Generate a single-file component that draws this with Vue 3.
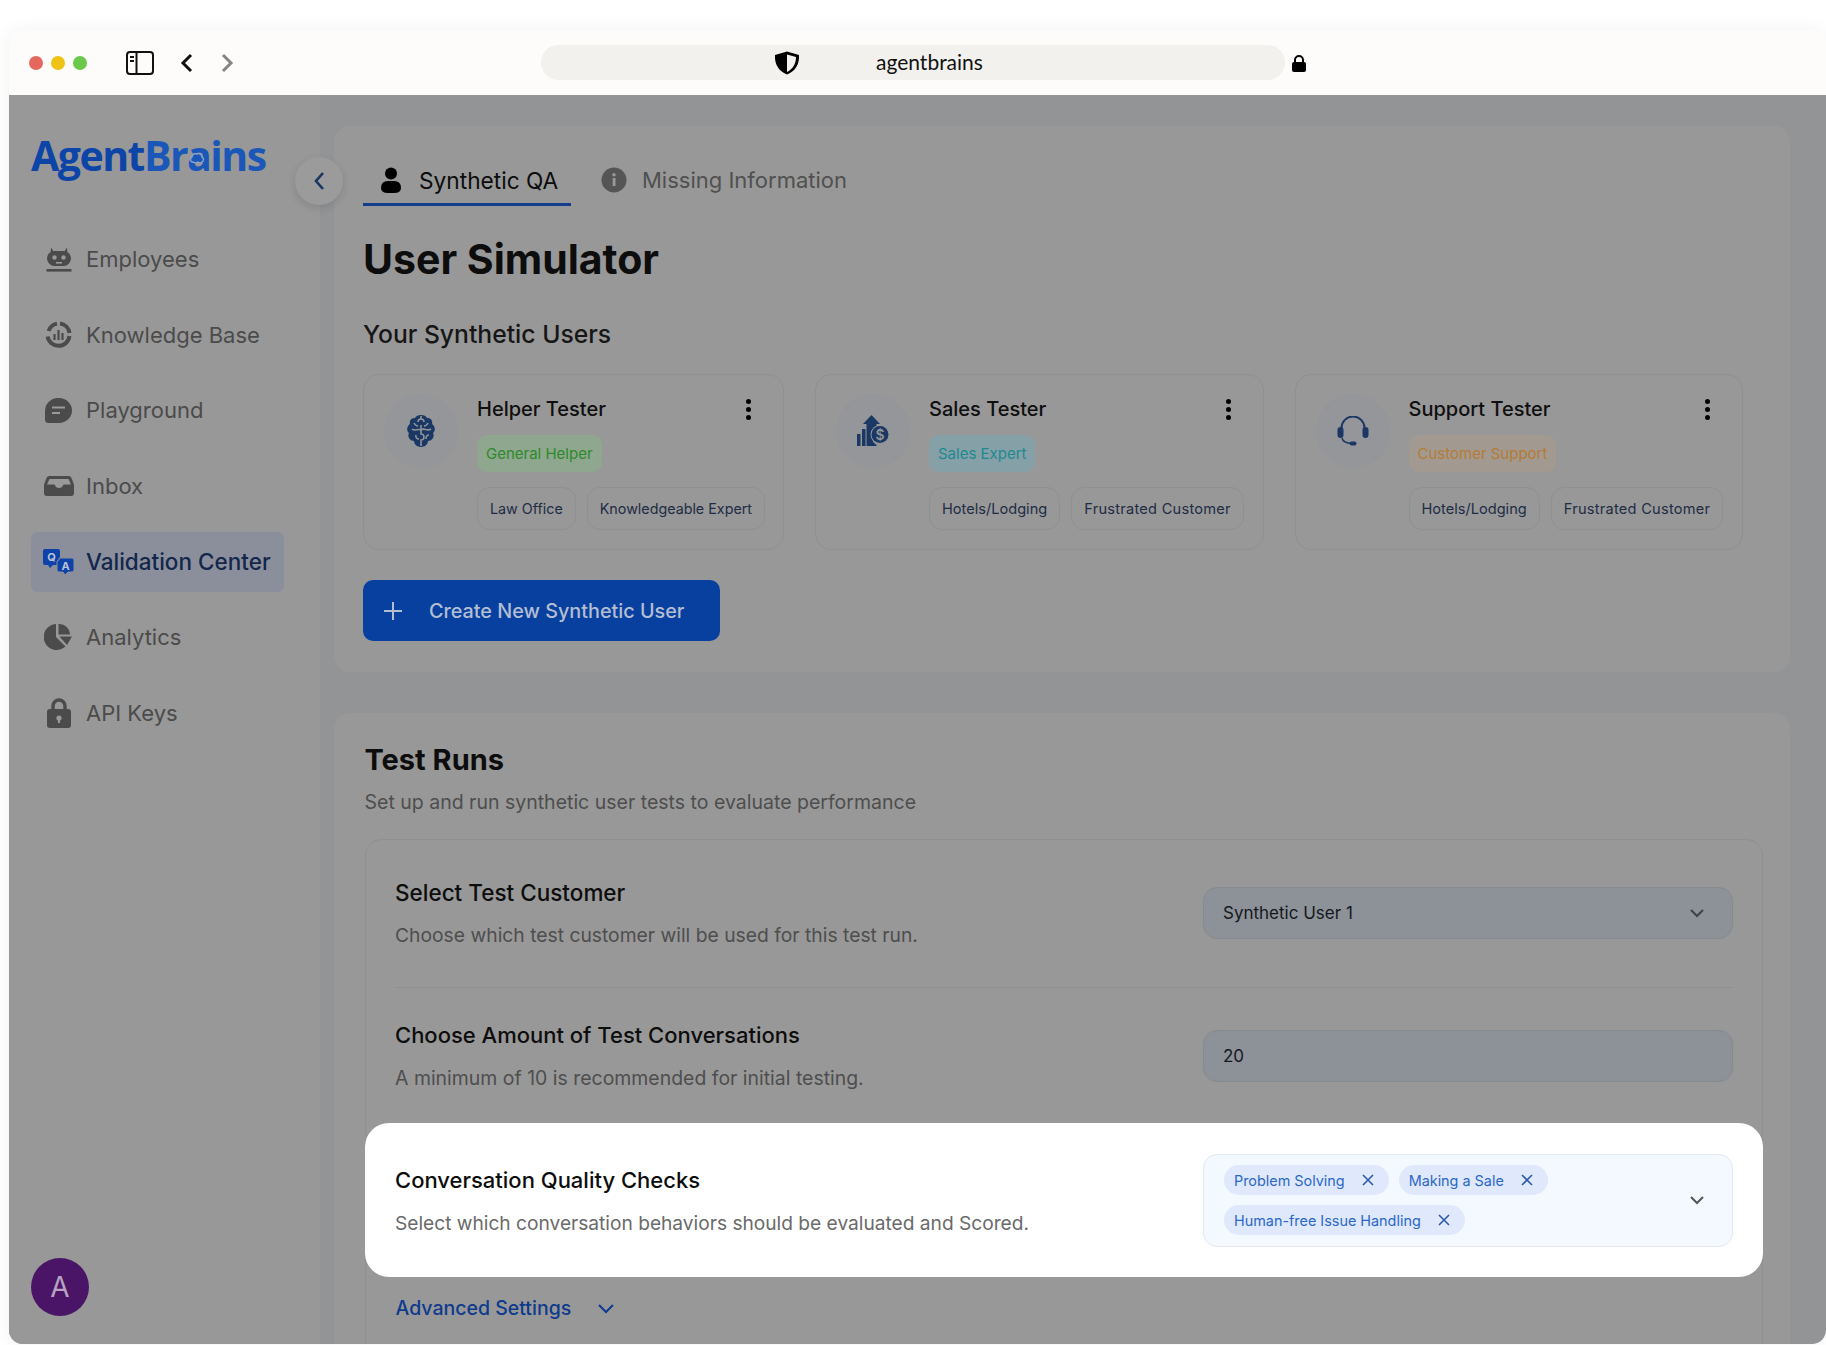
<template>
  <div class="page">
    <div class="window">
      <header class="toolbar">
        <div class="lights">
          <span class="light light-red"></span>
          <span class="light light-yellow"></span>
          <span class="light light-green"></span>
        </div>
        <svg class="panel-icon" width="28" height="24" viewBox="0 0 28 24" fill="none">
          <rect x="1" y="1" width="26" height="22" rx="3" stroke="#111" stroke-width="2" />
          <path d="M10.5 1v22" stroke="#111" stroke-width="2" />
          <path d="M4 6h4M4 10h4" stroke="#111" stroke-width="2" />
        </svg>
        <svg class="back" width="13" height="20" viewBox="0 0 13 20" fill="none">
          <path d="M11 2 3 10l8 8" stroke="#111" stroke-width="3" />
        </svg>
        <svg class="forward" width="13" height="20" viewBox="0 0 13 20" fill="none">
          <path d="m2 2 8 8-8 8" stroke="#858585" stroke-width="3" />
        </svg>
        <div class="address">
          <svg width="28" height="24" viewBox="0 0 28 24">
            <path d="M14 0.5 26 4c.6 9-3.4 16-12 19.5C5.400 20 1.400 13 2 4z" fill="#000" />
            <path d="M14 3.500 23 6c0 6.500-3 12-9 15z" fill="#f2f1ee" />
          </svg>
          <span class="address-text">agentbrains</span>
        </div>
        <svg class="lock" width="16" height="17" viewBox="0 0 16 17">
          <path d="M4 8V5a4 4 0 0 1 8 0v3" fill="none" stroke="#000" stroke-width="2" />
          <rect x="1" y="7" width="14" height="10" rx="2" fill="#000" />
        </svg>
      </header>

      <div class="app">
        <aside class="sidebar">
          <div class="logo">
            <span class="logo-a">Agent</span><span class="logo-b">Br<span class="logo-brain">a<svg width="16" height="14" viewBox="0 0 16 14" fill="none">
              <path d="M3 11C1 10 1 7 3 6c0-3 3-4 5-3 2-1 5 0 5 3 2 1 2 4 0 5-1 1-3 1-4 0-1 1-4 1-5 0z" fill="#1a57b8" stroke="#8fa3c4" stroke-width="1.400" />
            </svg></span>ins</span>
          </div>
          <nav class="nav">
            <a v-for="item in navItems" :key="item.label" class="nav-item" :class="{ active: item.active }">
              <span class="nav-icon">
                <svg v-if="item.icon === 'robot'" width="26" height="25" viewBox="0 0 26 25">
                  <path d="M5 0.500 8 5h10l3-4.500.500 6.500H4.500z" fill="#4b4b4b" />
                  <rect x="1" y="4" width="24" height="15" rx="7.500" fill="#4b4b4b" />
                  <circle cx="8.500" cy="10.500" r="2.200" fill="#999" />
                  <circle cx="17.500" cy="10.500" r="2.200" fill="#999" />
                  <rect x="10" y="15" width="6" height="1.600" fill="#999" />
                  <rect x="0.500" y="22" width="25" height="2.600" fill="#4b4b4b" />
                </svg>
                <svg v-else-if="item.icon === 'knowledge'" width="27" height="27" viewBox="0 0 27 27" fill="none">
                  <path d="M12 2.600A11 11 0 0 0 3.600 10M15 2.600A11 11 0 0 1 24.500 12M24.400 15A11 11 0 0 1 2.600 15.500" stroke="#4b4b4b" stroke-width="4" />
                  <path d="M9.500 13v6M13.500 9v10M17.500 12v7" stroke="#4b4b4b" stroke-width="2.200" />
                </svg>
                <svg v-else-if="item.icon === 'chat'" width="27" height="25" viewBox="0 0 27 25">
                  <path d="M14 0a13 12.500 0 1 1 0 25H3.500Q0 25 0 21.500V13A13 13 0 0 1 14 0z" fill="#4b4b4b" />
                  <path d="M7 9.500h13M7 15h8" stroke="#999" stroke-width="2.200" />
                </svg>
                <svg v-else-if="item.icon === 'inbox'" width="30" height="20" viewBox="0 0 30 20">
                  <path d="M5 0h20q2 0 3 3l2 6v8q0 3-3 3H3q-3 0-3-3V9l2-6q1-3 3-3z" fill="#4b4b4b" />
                  <path d="M3 8.500 5.500 3h19L27 8.500h-7.500Q18 12 15 12t-4.500-3.500z" fill="#999" />
                </svg>
                <svg v-else-if="item.icon === 'qa'" width="31" height="26" viewBox="0 0 31 26">
                  <path d="M2 0h13q2 0 2 2v12q0 2-2 2H10l-3 3-2-3H2q-2 0-2-2V2q0-2 2-2z" fill="#0d43a8" />
                  <path d="M16 9h13q2 0 2 2v10q0 2-2 2h-4l-3 3-2-3h-4q-2 0-2-2v-8q0-2 2-2z" fill="#0d43a8" stroke="#8a8f9b" stroke-width="1" />
                  <text x="8.500" y="12" text-anchor="middle" class="qa-letter">Q</text>
                  <text x="22.500" y="20.500" text-anchor="middle" class="qa-letter">A</text>
                </svg>
                <svg v-else-if="item.icon === 'pie'" width="29" height="26" viewBox="0 0 29 26">
                  <path d="M12 0v13l9.500 9.500A13 13 0 1 1 12 0z" fill="#4b4b4b" />
                  <path d="M14.500 0A11 11 0 0 1 26 10.500H14.500z" fill="#4b4b4b" />
                  <path d="M15.500 12.500H28L23 21z" fill="#4b4b4b" />
                </svg>
                <svg v-else width="26" height="30" viewBox="0 0 26 30">
                  <path d="M7 13V8a6 6 0 0 1 12 0v5" fill="none" stroke="#4b4b4b" stroke-width="3.400" />
                  <rect x="1" y="11" width="24" height="19" rx="3" fill="#4b4b4b" />
                  <circle cx="13" cy="20" r="2.600" fill="#999" />
                  <rect x="12" y="20" width="2" height="5" fill="#999" />
                </svg>
              </span>
              <span>{{ item.label }}</span>
            </a>
          </nav>
          <div class="avatar">A</div>
        </aside>

        <button class="collapse" type="button">
          <svg width="12" height="20" viewBox="0 0 12 20" fill="none">
            <path d="M10 2 3 10l7 8" stroke="#1a3563" stroke-width="2.600" />
          </svg>
        </button>

        <main class="main">
          <section class="card card-top">
            <div class="tabs">
              <div class="tab tab-on">
                <svg width="22" height="26" viewBox="0 0 22 26">
                  <circle cx="11" cy="6.500" r="6" fill="#000" />
                  <path d="M1 21q0-7 7-7h6q7 0 7 7 0 5-7 5H8q-7 0-7-5z" fill="#000" />
                </svg>
                <span>Synthetic QA</span>
              </div>
              <div class="tab tab-off">
                <svg width="26" height="26" viewBox="0 0 26 26">
                  <circle cx="13" cy="13" r="12.500" fill="#555" />
                  <rect x="11.700" y="11" width="2.800" height="8" fill="#999" />
                  <circle cx="13" cy="7.700" r="1.700" fill="#999" />
                </svg>
                <span>Missing Information</span>
              </div>
            </div>

            <h1 class="title">User Simulator</h1>
            <h2 class="subtitle">Your Synthetic Users</h2>

            <div class="users">
              <article v-for="user in users" :key="user.name" class="user" :class="user.size">
                <div class="user-avatar">
                  <svg v-if="user.icon === 'brain'" width="28" height="32" viewBox="0 0 28 32">
                    <path d="M14 0c3 0 5 1 6 3 4 0 6 3 5 6 3 2 4 7 1 9 2 4-1 8-5 8 0 3-3 6-7 6s-7-3-7-6c-4 0-7-4-5-8-3-2-2-7 1-9-1-3 1-6 5-6 1-2 3-3 6-3z" fill="#1b3763" />
                    <path d="M14 1v4m-3 2a3 3 0 0 1 6 0M14 10v5c-3-2-6 2-9-1M14 15c3-3 6 2 10-1M14 15v4a3 3 0 0 1 0 6v6M9 20a3 3 0 0 0 3 4M7 8c1 2 2 3 4 3M21 8c-1 2-2 3-4 3M22 20c-2 0-3 1-3 4" fill="none" stroke="#8f9398" stroke-width="1.600" />
                  </svg>
                  <svg v-else-if="user.icon === 'sales'" width="32" height="32" viewBox="0 0 32 32">
                    <path d="M14.500 0 23 9h-3.500v5.300a9 9 0 0 0 0 15.600V31h-10V9H6z" fill="#1b3763" />
                    <rect x="0" y="19" width="3.500" height="12" fill="#1b3763" />
                    <rect x="5" y="14" width="3.500" height="17" fill="#1b3763" />
                    <circle cx="23" cy="19.500" r="9.500" fill="#949699" />
                    <circle cx="23" cy="19.500" r="8.500" fill="#1b3763" />
                    <text x="23" y="24.500" text-anchor="middle" class="dollar">$</text>
                  </svg>
                  <svg v-else width="32" height="30" viewBox="0 0 32 30" fill="none">
                    <path d="M4.500 14V12a11.500 11.500 0 0 1 23 0v2" stroke="#1b3763" stroke-width="2" />
                    <rect x="0.500" y="11" width="6" height="11" rx="3" fill="#1b3763" />
                    <rect x="25.500" y="11" width="6" height="11" rx="3" fill="#1b3763" />
                    <path d="M5 22q1 5 10 5.500" stroke="#1b3763" stroke-width="1.500" />
                    <rect x="12.500" y="25.500" width="7" height="4" rx="2" fill="#1b3763" />
                  </svg>
                </div>
                <div class="user-body">
                  <div class="user-head">
                    <span class="user-name">{{ user.name }}</span>
                    <span class="kebab"><i></i><i></i><i></i></span>
                  </div>
                  <span class="badge" :class="user.tone">{{ user.badge }}</span>
                  <div class="tags">
                    <span v-for="tag in user.tags" :key="tag" class="tag">{{ tag }}</span>
                  </div>
                </div>
              </article>
            </div>

            <button class="create" type="button">
              <svg width="18" height="18" viewBox="0 0 18 18" fill="none">
                <path d="M9 0v18M0 9h18" stroke="#b3bed2" stroke-width="2" />
              </svg>
              <span>Create New Synthetic User</span>
            </button>
          </section>

          <section class="card card-runs">
            <h2 class="runs-title">Test Runs</h2>
            <p class="runs-sub">Set up and run synthetic user tests to evaluate performance</p>

            <div class="panel">
              <div class="row row-first">
                <div class="row-text">
                  <h3>Select Test Customer</h3>
                  <p>Choose which test customer will be used for this test run.</p>
                </div>
                <div class="field">
                  <span>Synthetic User 1</span>
                  <svg width="16" height="10" viewBox="0 0 16 10" fill="none">
                    <path d="m2 2 6 6 6-6" stroke="#3f4247" stroke-width="2" />
                  </svg>
                </div>
              </div>
              <div class="row row-second">
                <div class="row-text">
                  <h3>Choose Amount of Test Conversations</h3>
                  <p>A minimum of 10 is recommended for initial testing.</p>
                </div>
                <div class="field">
                  <span>20</span>
                </div>
              </div>
              <div class="row-hl">
                <div class="row-text">
                  <h3>Conversation Quality Checks</h3>
                  <p>Select which conversation behaviors should be evaluated and Scored.</p>
                </div>
                <div class="multi">
                  <div class="chips">
                    <span v-for="chip in chips" :key="chip" class="chip">
                      {{ chip }}
                      <svg width="12" height="12" viewBox="0 0 12 12" fill="none">
                        <path d="m1 1 10 10M11 1 1 11" stroke="#2f5ba6" stroke-width="1.600" />
                      </svg>
                    </span>
                  </div>
                  <svg width="16" height="10" viewBox="0 0 16 10" fill="none">
                    <path d="m2 2 6 6 6-6" stroke="#555" stroke-width="2" />
                  </svg>
                </div>
              </div>
              <div class="advanced">
                <span>Advanced Settings</span>
                <svg width="18" height="11" viewBox="0 0 18 11" fill="none">
                  <path d="m2 2 7 7 7-7" stroke="#0e3b8d" stroke-width="2" />
                </svg>
              </div>
            </div>
          </section>
        </main>
      </div>
    </div>
  </div>
</template>

<script setup>
const navItems = [
  { label: 'Employees', icon: 'robot' },
  { label: 'Knowledge Base', icon: 'knowledge' },
  { label: 'Playground', icon: 'chat' },
  { label: 'Inbox', icon: 'inbox' },
  { label: 'Validation Center', icon: 'qa', active: true },
  { label: 'Analytics', icon: 'pie' },
  { label: 'API Keys', icon: 'lock' }
];

const users = [
  { name: 'Helper Tester', badge: 'General Helper', tone: 'tone-green', icon: 'brain', size: 'narrow', tags: ['Law Office', 'Knowledgeable Expert'] },
  { name: 'Sales Tester', badge: 'Sales Expert', tone: 'tone-teal', icon: 'sales', size: 'wide', tags: ['Hotels/Lodging', 'Frustrated Customer'] },
  { name: 'Support Tester', badge: 'Customer Support', tone: 'tone-orange', icon: 'headset', size: 'wide', tags: ['Hotels/Lodging', 'Frustrated Customer'] }
];

const chips = ['Problem Solving', 'Making a Sale', 'Human-free Issue Handling'];
</script>

<style>
html,
body {
  margin: 0;
  background: #fff;
}
</style>

<style scoped>
.page {
  width: 1826px;
  height: 1345px;
  box-sizing: border-box;
  padding: 30px 0 1px 9px;
  overflow: hidden;
  font-family: Inter, "Liberation Sans", sans-serif;
}

.window {
  position: relative;
  display: flex;
  flex-direction: column;
  height: 100%;
  border-radius: 14px;
  overflow: hidden;
  box-shadow: 0 0 18px rgba(0, 0, 0, 0.06);
}

.toolbar {
  display: flex;
  align-items: center;
  flex: none;
  height: 65px;
  background: #fdfcfa;
}

.lights {
  display: flex;
  gap: 8px;
  margin-left: 20px;
}

.light {
  width: 14px;
  height: 14px;
  border-radius: 50%;
}

.light-red { background: #e5685f; }
.light-yellow { background: #efc316; }
.light-green { background: #6bc84a; }

.panel-icon {
  margin-left: 39px;
}

.back {
  margin-left: 26px;
}

.forward {
  margin-left: 28px;
}

.address {
  display: flex;
  align-items: center;
  width: 744px;
  height: 35px;
  margin-left: 307px;
  padding-left: 232px;
  box-sizing: border-box;
  border-radius: 18px;
  background: #f2f1ee;
}

.address-text {
  margin: -2px 0 0 75px;
  font-family: Lato, sans-serif;
  font-size: 21px;
  color: #111;
}

.lock {
  margin-left: 6px;
  margin-top: 2px;
}

.app {
  position: relative;
  display: flex;
  flex: 1;
  min-height: 0;
  background: #929496;
}

.sidebar {
  display: flex;
  flex-direction: column;
  flex: none;
  width: 311px;
  height: 100%;
  box-sizing: border-box;
  padding: 32px 0 28px 22px;
  background: #989898;
}

.logo {
  height: 56px;
  line-height: 56px;
  font-family: "Open Sans", sans-serif;
  font-size: 41px;
  font-weight: 700;
  letter-spacing: -1.500px;
}

.logo-a { color: #0d44a8; }
.logo-b { color: #1a57b8; }

.logo-brain {
  position: relative;
}

.logo-brain svg {
  position: absolute;
  left: 2px;
  top: 24px;
}

.nav {
  display: flex;
  flex-direction: column;
  gap: 15.700px;
  width: 253px;
  margin-top: 46px;
}

.nav-item {
  display: flex;
  align-items: center;
  gap: 12px;
  height: 60px;
  padding-left: 12px;
  border-radius: 6px;
  font-size: 22px;
  color: #4b4b4b;
}

.nav-item.active {
  background: #8a8f9b;
  color: #13264c;
  font-size: 22.500px;
  font-weight: 500;
}

.nav-icon {
  display: flex;
  align-items: center;
  justify-content: center;
  width: 31px;
}

.qa-letter {
  font-family: Inter, sans-serif;
  font-size: 11px;
  font-weight: 700;
  fill: #b8c2d6;
}

.dollar {
  font-family: Inter, sans-serif;
  font-size: 14px;
  font-weight: 600;
  fill: #8f9398;
}

.avatar {
  display: flex;
  align-items: center;
  justify-content: center;
  width: 58px;
  height: 58px;
  margin-top: auto;
  border-radius: 50%;
  background: #4a1566;
  color: #b7a3c2;
  font-size: 28px;
}

.collapse {
  position: absolute;
  top: 62px;
  left: 286px;
  display: flex;
  align-items: center;
  justify-content: center;
  width: 48px;
  height: 48px;
  padding: 0;
  border: 0;
  border-radius: 50%;
  background: #9b9b9b;
  box-shadow: 0 3px 8px rgba(0, 0, 0, 0.12);
}

.main {
  flex: 1;
  min-width: 0;
  padding: 31px 36px 0 14px;
}

.card {
  border-radius: 16px;
  background: #989898;
}

.card-top {
  height: 546px;
  box-sizing: border-box;
  padding: 31px 29px;
}

.tabs {
  display: flex;
  gap: 30px;
}

.tab {
  display: flex;
  align-items: center;
  height: 49px;
  box-sizing: border-box;
  border-bottom: 3px solid transparent;
  font-size: 22px;
}

.tab-on {
  gap: 17px;
  width: 208px;
  padding-left: 17px;
  border-bottom-color: #153d8e;
  font-size: 22.700px;
  color: #0c0c0c;
}

.tab-off {
  gap: 15px;
  color: #505050;
}

.title {
  margin: 30px 0 0;
  font-size: 41px;
  line-height: 46px;
  font-weight: 700;
  color: #0d0d0d;
}

.subtitle {
  margin: 37px 0 0;
  font-size: 24.700px;
  line-height: 30px;
  font-weight: 500;
  color: #161616;
}

.users {
  display: flex;
  gap: 31px;
  margin-top: 25px;
}

.user {
  display: flex;
  gap: 19px;
  height: 176px;
  box-sizing: border-box;
  padding: 19px 20px 0;
  border: 1px solid #8f9092;
  border-radius: 16px;
}

.narrow { width: 421px; }
.wide { width: 448.500px; }

.user-avatar {
  display: flex;
  align-items: center;
  justify-content: center;
  flex: none;
  width: 74px;
  height: 74px;
  border-radius: 50%;
  background: #949699;
}

.user-body {
  flex: 1;
  min-width: 0;
}

.user-head {
  display: flex;
  align-items: center;
  justify-content: space-between;
  height: 30px;
  padding-right: 12px;
}

.user-name {
  font-size: 20px;
  font-weight: 500;
  color: #0f0f0f;
}

.kebab {
  display: flex;
  flex-direction: column;
  gap: 3px;
}

.kebab i {
  width: 5px;
  height: 5px;
  border-radius: 50%;
  background: #000;
}

.badge {
  display: inline-block;
  height: 37px;
  line-height: 37px;
  margin-top: 11px;
  padding: 0 9px;
  border-radius: 10px;
  font-size: 15px;
}

.tone-green { background: #8fa78f; color: #2c8a2a; }
.tone-teal { background: #85a0a6; color: #1d8a92; }
.tone-orange { background: #a29a90; color: #b67a36; }

.tags {
  display: flex;
  gap: 11px;
  margin-top: 15px;
}

.tag {
  height: 43px;
  line-height: 42px;
  box-sizing: border-box;
  padding: 0 12px;
  border: 1px solid #8f9092;
  border-radius: 13px;
  font-size: 14.600px;
  white-space: nowrap;
  color: #1e2c45;
}

.narrow .tag {
  font-size: 14.300px;
}

.wide .tag:last-child {
  letter-spacing: 0.25px;
}

.create {
  display: flex;
  align-items: center;
  gap: 27px;
  width: 357px;
  height: 61px;
  margin-top: 30px;
  padding: 0 0 0 21px;
  border: 0;
  border-radius: 10px;
  background: #0840a0;
  font-family: inherit;
  font-size: 19.800px;
  font-weight: 500;
  color: #b3bed2;
}

.card-runs {
  height: 700px;
  margin-top: 41px;
  padding: 29px 27.500px 0 30.500px;
  box-sizing: border-box;
}

.runs-title {
  margin: 0;
  font-size: 29px;
  line-height: 36px;
  font-weight: 700;
  color: #0d0d0d;
}

.runs-sub {
  margin: 10px 0 0;
  font-size: 19.500px;
  line-height: 28px;
  color: #4e4e4e;
}

.panel {
  margin-top: 23px;
  height: 600px;
  border: 1px solid #8f9092;
  border-radius: 16px;
}

.row {
  display: flex;
  align-items: center;
  justify-content: space-between;
  margin: 0 28.500px 0 29.500px;
}

.row-first {
  height: 148px;
  box-sizing: border-box;
  padding-bottom: 1px;
  border-bottom: 1px solid #8f9092;
}

.row-second {
  height: 135px;
}

.row-text h3 {
  margin: 0;
  font-size: 22px;
  line-height: 30px;
  font-weight: 500;
  color: #0d0d0d;
}

.row-first h3 {
  font-size: 22.500px;
}

.row-text p {
  margin: 14px 0 0;
  font-size: 19.300px;
  line-height: 26px;
  color: #4e4e4e;
}

.row-second .row-text p {
  margin-top: 15px;
  font-size: 19.450px;
}

.field {
  display: flex;
  align-items: center;
  justify-content: space-between;
  width: 530px;
  height: 52px;
  box-sizing: border-box;
  padding: 0 27px 0 19px;
  border: 1px solid #858a90;
  border-radius: 14px;
  background: #8d9198;
  font-size: 17px;
  color: #15181d;
}

.row-hl {
  position: relative;
  display: flex;
  align-items: center;
  justify-content: space-between;
  height: 154px;
  margin: 0 -1px;
  padding: 0 29.500px 0 30.500px;
  border-radius: 24px;
  background: #fff;
}

.row-hl .row-text p {
  margin-top: 15px;
  font-size: 19.150px;
  color: #6a6a6a;
}

.multi {
  display: flex;
  align-items: center;
  justify-content: space-between;
  width: 530px;
  height: 93px;
  box-sizing: border-box;
  padding: 0 27px 0 20px;
  border: 1px solid #e3e8f2;
  border-radius: 14px;
  background: #f4f8ff;
}

.chips {
  display: flex;
  flex-wrap: wrap;
  gap: 10px;
  width: 400px;
}

.chip {
  display: flex;
  align-items: center;
  gap: 17px;
  height: 30px;
  padding: 0 15px 0 10px;
  border-radius: 15px;
  background: #dfe9fb;
  font-size: 14.400px;
  white-space: nowrap;
  color: #2b68c8;
}

.advanced {
  display: flex;
  align-items: center;
  gap: 26px;
  height: 62px;
  padding-left: 30px;
  font-size: 19.500px;
  font-weight: 500;
  color: #0e3b8d;
}
</style>
